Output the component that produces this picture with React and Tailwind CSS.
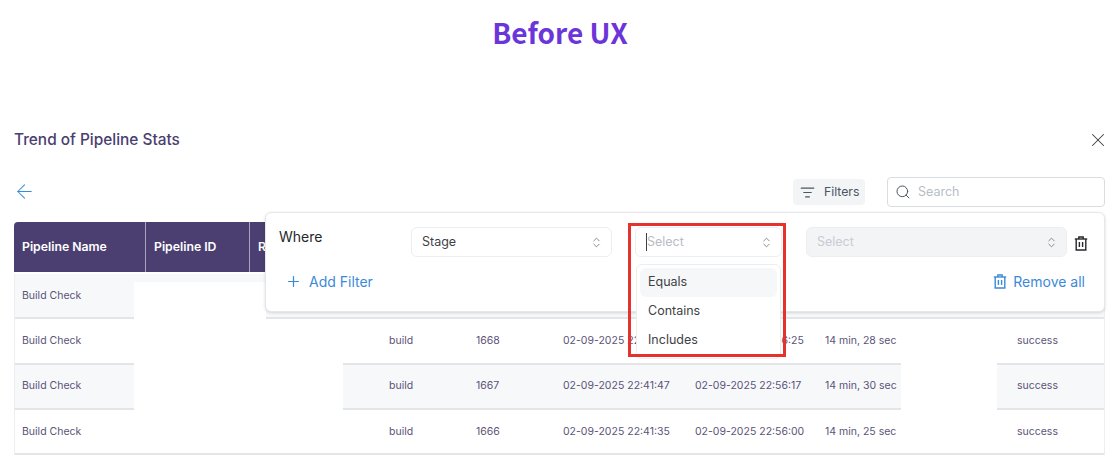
import React from 'react';
import { ArrowLeft, ChevronsUpDown, ListFilter, Plus, Search, X } from 'lucide-react';

const rows = [
  { build: '1669', start: '02-09-2025 22:42:01', end: '02-09-2025 22:56:40', duration: '14 min, 39 sec', alt: true },
  { build: '1668', start: '02-09-2025 22:41:57', end: '02-09-2025 22:56:25', duration: '14 min, 28 sec', alt: false },
  { build: '1667', start: '02-09-2025 22:41:47', end: '02-09-2025 22:56:17', duration: '14 min, 30 sec', alt: true },
  { build: '1666', start: '02-09-2025 22:41:35', end: '02-09-2025 22:56:00', duration: '14 min, 25 sec', alt: false },
];

const gridCols = 'grid grid-cols-[132px_104px_131px_87px_87px_132px_130px_192px_96px]';

// square bin with two bars, lucide's trash is too round for this one
const BinIcon = ({ className }) => (
  <svg viewBox="0 0 14 15" fill="none" stroke="currentColor" strokeWidth="1.4" className={className}>
    <path d="M0.8 3h12.4" />
    <path d="M4.8 3V1h4.4v2" />
    <path d="M2.2 3v11h9.6V3" />
    <path d="M5.4 6v5M8.6 6v5" />
  </svg>
);

const Row = ({ row }) => (
  <div className={`${gridCols} h-[45.3px] items-center border-b-2 border-[#e3e5e9] text-[10.5px] text-[#5b5378] ${row.alt ? 'bg-[#f7f8fa]' : 'bg-white'}`}>
    <div className="pl-[7px]">Build Check</div>
    <div />
    <div />
    <div className="pl-[7px]">build</div>
    <div className="pl-[7px]">{row.build}</div>
    <div className="pl-[7px]">{row.start}</div>
    <div className="pl-[7px]">{row.end}</div>
    <div className="pl-[7px]">{row.duration}</div>
    <div className="pl-[7px]">success</div>
  </div>
);

const Select = ({ className, text, textClass, children }) => (
  <div className={`relative flex h-[30px] items-center justify-between rounded-md border border-[#eceef1] pl-[10px] pr-[8px] text-[12.5px] ${className}`}>
    <span className={textClass}>{text}</span>
    <ChevronsUpDown size={13} strokeWidth={1.5} className="text-[#6b7280]" />
    {children}
  </div>
);

export default function App() {
  return (
    <div className="relative h-[467px] w-[1120px] overflow-hidden bg-white font-['Inter',sans-serif]">
      <h1 className="pt-[11px] text-center font-['Noto_Sans_CJK_SC',sans-serif] text-[28px] font-bold leading-[42px] text-[#6b35d9]">
        Before UX
      </h1>

      <div className="mt-[75px] flex h-[24px] items-center justify-between pl-[14px] pr-[11px]">
        <span className="text-[15.4px] font-medium text-[#4a4070]">Trend of Pipeline Stats</span>
        <X size={22} strokeWidth={1.1} className="text-[#3f3f46]" />
      </div>

      <div className="mt-[25px] flex h-[30px] items-center pl-[13px] pr-[15px]">
        <ArrowLeft size={23} strokeWidth={1.1} className="mb-[2px] text-[#3b8ad9]" />
        <div className="ml-auto flex h-[26px] w-[72px] items-center gap-[9px] rounded-sm bg-[#f3f4f6] pl-[7px] text-[12.25px] text-[#4b5563]">
          <ListFilter size={15} strokeWidth={1.75} />
          Filters
        </div>
        <div className="ml-[22px] flex h-[30px] w-[218px] items-center gap-[7px] rounded border border-[#d9dce1] pl-[7px] text-[12.5px] text-[#b9bdc5]">
          <Search size={16} strokeWidth={1.5} className="text-[#4b5563]" />
          Search
        </div>
      </div>

      <div className="mx-[14px] mt-[15px] w-[1091px]">
        <div className={`${gridCols} h-[50px] rounded-t-sm bg-[#4b3f72] text-[12.25px] font-semibold text-white`}>
          <div className="flex items-center border-r border-[#a9a3c0] pl-2">Pipeline Name</div>
          <div className="flex items-center border-r border-[#a9a3c0] pl-2">Pipeline ID</div>
          <div className="flex items-center pl-2">Run ID</div>
        </div>
        <div className="mt-[2px] border-x border-[#eceef1]">
          {rows.map((row) => (
            <Row key={row.build} row={row} />
          ))}
        </div>
      </div>

      {/* white cover blocks */}
      <div className="absolute left-[134px] top-[282px] h-[38px] w-[132px] bg-white" />
      <div className="absolute left-[134px] top-[320px] h-[125px] w-[209px] bg-white" />
      <div className="absolute left-[901px] top-[320px] h-[125px] w-[96px] bg-white" />

      {/* filter popover */}
      <div className="absolute left-[265px] top-[212px] h-[100px] w-[840px] rounded-md border border-[#e5e7eb] bg-white shadow-[0_1px_3px_rgba(0,0,0,0.15)]">
        <div className="flex items-start pl-[13px] pt-[14px]">
          <span className="w-[132px] text-[14px] leading-[20px] text-[#27272a]">Where</span>
          <Select className="w-[201px]" text="Stage" textClass="text-[#3f3f46]" />
          <Select className="ml-[23px] w-[147px]" text="Select" textClass="border-l border-[#3f3f46] text-[#b9bdc5]">
            <div className="absolute left-0 top-[36px] z-10 flex w-full flex-col rounded-md border border-[#eceef1] bg-white p-[3px] text-[12.5px] text-[#3f3f46]">
              <div className="flex h-[29px] items-center rounded-md bg-[#f6f7f8] pl-[8px]">Equals</div>
              <div className="flex h-[29px] items-center pl-[8px]">Contains</div>
              <div className="flex h-[29px] items-center pl-[8px]">Includes</div>
            </div>
          </Select>
          <Select className="ml-[24px] w-[261px] bg-[#f3f4f6]" text="Select" textClass="text-[#c9ccd2]" />
          <BinIcon className="ml-[7px] mt-[9px] h-[15px] w-[14px] text-[#27272a]" />
        </div>
        <div className="mt-[14px] flex items-center pl-[19px] pr-[19px] text-[14px] text-[#3b8ad9]">
          <Plus size={17} strokeWidth={1.75} />
          <span className="ml-[7px]">Add Filter</span>
          <BinIcon className="ml-auto h-[15px] w-[14px]" />
          <span className="ml-[6px]">Remove all</span>
        </div>
      </div>

      {/* red highlight */}
      <div className="pointer-events-none absolute left-[628px] top-[223px] z-20 h-[134px] w-[158px] border-[3px] border-[#e5322d]" />
    </div>
  );
}
